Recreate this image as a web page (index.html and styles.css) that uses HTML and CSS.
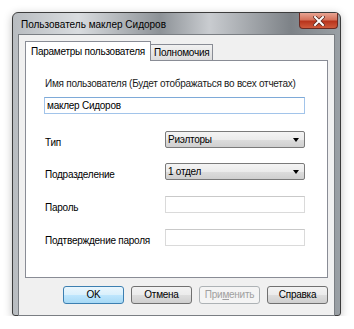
FILE: index.html
```html
<!DOCTYPE html>
<html lang="ru">
<head>
    <meta charset="UTF-8">
    <title>Пользователь маклер Сидоров</title>
    <link rel="stylesheet" href="styles.css">
</head>
<body>
    <div class="window">
        <div class="titlebar">
            <span class="title">Пользователь маклер Сидоров</span>
            <div class="close-btn">
                <svg width="12" height="10" viewBox="0 0 12 10">
                    <path d="M2 1 L10 9 M10 1 L2 9" stroke="#5a2a22" stroke-width="3.6" stroke-linecap="square"/>
                    <path d="M2 1 L10 9 M10 1 L2 9" stroke="#fff" stroke-width="2" stroke-linecap="square"/>
                </svg>
            </div>
        </div>
        <div class="client">
            <div class="tabs">
                <div class="tab active">Параметры пользователя</div>
                <div class="tab">Полномочия</div>
            </div>
            <div class="panel">
                <div class="caption">Имя пользователя (Будет отображаться во всех отчетах)</div>
                <div class="textbox focused">маклер Сидоров</div>

                <div class="row first">
                    <span class="label">Тип</span>
                    <div class="combo">Риэлторы<span class="arrow"></span></div>
                </div>
                <div class="row">
                    <span class="label">Подразделение</span>
                    <div class="combo">1 отдел<span class="arrow"></span></div>
                </div>
                <div class="row pass">
                    <span class="label">Пароль</span>
                    <div class="textbox small"></div>
                </div>
                <div class="row pass">
                    <span class="label">Подтверждение пароля</span>
                    <div class="textbox small"></div>
                </div>
            </div>
            <div class="buttons">
                <div class="btn default">OK</div>
                <div class="btn">Отмена</div>
                <div class="btn disabled">При<u>м</u>енить</div>
                <div class="btn">Справка</div>
            </div>
        </div>
    </div>
</body>
</html>
```

FILE: styles.css
```css
body {
    margin: 0;
    background: #fff;
    font-family: "Liberation Sans", Arial, sans-serif;
    font-size: 10px;
    letter-spacing: -0.25px;
    color: #000;
    white-space: nowrap;
}
.window {
    position: relative;
    margin: 12px 0 0 12px;
    width: 317px;
    height: 297px;
    border: 1px solid #3c3c3c;
    border-radius: 6px 6px 3px 3px;
    background: linear-gradient(90deg, #b8bcc0 0%, #d9dcdf 20%, #8d9297 45%, #c9ccd0 60%, #7d8287 85%, #9aa0a5 100%);
    box-shadow: 0 2px 8px rgba(0, 0, 0, 0.25);
    padding: 0 5px 5px 5px;
}
.titlebar {
    height: 21px;
    display: flex;
    align-items: flex-end;
}
.title {
    margin-left: 3px;
    margin-bottom: 3px;
    line-height: 12px;
    font-size: 10px;
    letter-spacing: 0;
    color: #000;
}
.close-btn {
    position: absolute;
    top: 0;
    right: 2px;
    width: 37px;
    height: 15px;
    border: 1px solid #6b2a22;
    border-top: none;
    border-radius: 0 0 4px 4px;
    background: linear-gradient(#e8a493 0%, #d5735c 45%, #b8341c 55%, #cf5a3c 100%);
    display: flex;
    align-items: center;
    justify-content: center;
}
.client {
    background: #f0f0f0;
    border: 1px solid #7a7e83;
    height: 274px;
    padding: 6px 6px 0 6px;
}
.tabs {
    display: flex;
    align-items: flex-end;
    height: 19px;
}
.tab {
    height: 15px;
    line-height: 15px;
    padding: 0 3px;
    border: 1px solid #898c95;
    border-bottom: none;
    background: linear-gradient(#f2f2f2, #dcdcdc);
    margin-left: -1px;
}
.tab.active {
    height: 19px;
    line-height: 19px;
    background: #fff;
    width: 119px;
    padding: 0 0 0 5px;
    margin-left: 0;
    position: relative;
    z-index: 1;
    margin-bottom: -1px;
}
.panel {
    background: #fff;
    border: 1px solid #898c95;
    height: 216px;
    padding: 0 22px 0 18px;
}
.caption {
    margin-top: 17px;
    margin-left: 1px;
    color: #1a1a1a;
}
.textbox {
    height: 15px;
    border: 1px solid #c2c6cc;
    background: #fff;
    line-height: 15px;
    padding-left: 2px;
}
.textbox.focused {
    margin-top: 8px;
    border-color: #a2c4ea;
    border-top-color: #7eaad8;
}
.row {
    display: flex;
    align-items: center;
    margin-top: 14px;
}
.row.first {
    margin-top: 16px;
}
.row.pass {
    margin-top: 16px;
}
.row .label {
    width: 120px;
    padding-left: 1px;
    margin-top: 7px;
}
.row.pass .label {
    margin-top: 5px;
}
.combo {
    position: relative;
    width: 136px;
    height: 15px;
    line-height: 15px;
    padding-left: 2px;
    border: 1px solid #7a7a7a;
    border-radius: 2px;
    background: linear-gradient(#f4f4f4 0%, #ebebeb 50%, #dddddd 51%, #cfcfcf 100%);
}
.arrow {
    position: absolute;
    right: 5px;
    top: 6px;
    border-left: 3.5px solid transparent;
    border-right: 3.5px solid transparent;
    border-top: 4px solid #000;
}
.textbox.small {
    width: 136px;
    border-color: #dadada;
    border-top-color: #c9c9c9;
}
.buttons {
    display: flex;
    justify-content: flex-end;
    gap: 7px;
    margin-top: 8px;
}
.btn {
    width: 59px;
    height: 16px;
    line-height: 16px;
    text-align: center;
    border: 1px solid #707070;
    border-radius: 3px;
    background: linear-gradient(#f2f2f2 0%, #ebebeb 50%, #dddddd 51%, #cfcfcf 100%);
}
.btn.default {
    border-color: #3c7fb1;
    background: linear-gradient(#eaf6fd 0%, #d9f0fc 50%, #bee6fd 51%, #a7d9f5 100%);
}
.btn.disabled {
    color: #a0a0a0;
    border-color: #adb2b5;
    background: #f4f4f4;
}
.btn.disabled u {
    text-decoration: underline;
}
```
